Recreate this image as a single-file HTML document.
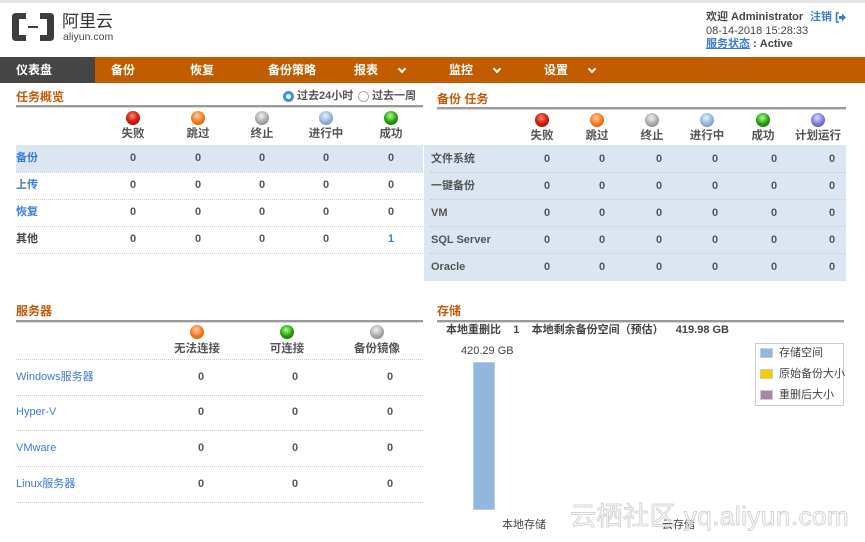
<!DOCTYPE html>
<html><head><meta charset="utf-8"><style>
*{margin:0;padding:0;box-sizing:border-box}
body{width:865px;height:542px;overflow:hidden;background:#fff;font-family:"Liberation Sans","Noto Sans CJK SC",sans-serif;font-size:11px;line-height:14px;color:#444;position:relative}
.a{position:absolute;white-space:nowrap}
.b{font-weight:bold}
.t{color:#c05a0a;font-weight:bold;font-size:12px}
.rule{position:absolute;height:3px;border-top:2px solid #9a9a9a;border-bottom:1px solid #d8d8d8}
.ball{position:absolute;width:14px;height:14px;border-radius:50%}
.red{background:radial-gradient(circle at 45% 35%,#ff8a70 0,#d42010 45%,#8a0a00 100%)}
.org{background:radial-gradient(circle at 45% 35%,#ffd0a0 0,#f47a24 50%,#c04a00 100%)}
.gry{background:radial-gradient(circle at 45% 35%,#f0f0f0 0,#a8a8a8 55%,#707070 100%)}
.blu{background:radial-gradient(circle at 45% 35%,#e6f0ff 0,#8eb0da 55%,#5a7eac 100%)}
.grn{background:radial-gradient(circle at 45% 35%,#b0ff90 0,#28a010 50%,#0a6000 100%)}
.pur{background:radial-gradient(circle at 45% 35%,#d8d8ff 0,#7a74d8 55%,#4a44a0 100%)}
.lbl{position:absolute;font-size:11.5px;font-weight:bold;color:#555;transform:translateX(-50%);white-space:nowrap}
.v{position:absolute;font-weight:bold;color:#555;transform:translateX(-50%)}
.lnk{color:#3a7bd5}
.sep{position:absolute;border-top:1px dotted #ccc}
.nav{position:absolute;top:57px;height:26px;color:#fff;font-weight:bold;font-size:12px;line-height:26px}
.chev{position:absolute;width:6px;height:6px;border-right:2px solid #fff;border-bottom:2px solid #fff;transform:rotate(45deg)}
</style></head><body>
<div class="a" style="left:0;top:0;width:865px;height:3px;background:#e6e6e6"></div>
<svg class="a" style="left:10px;top:11px" width="46" height="32" viewBox="0 0 46 32">
<path d="M16 2 H6 Q2 2 2 6 V26 Q2 30 6 30 H16 V24 H9 V8 H16Z" fill="#3d3d3d"/>
<path d="M30 2 H40 Q44 2 44 6 V26 Q44 30 40 30 H30 V24 H37 V8 H30Z" fill="#3d3d3d"/>
<rect x="18" y="15" width="10" height="2" fill="#3d3d3d"/>
</svg>
<div class="a" style="left:62px;top:12px;font-size:17px;line-height:20px;color:#333">阿里云</div>
<div class="a" style="left:63px;top:30px;font-size:10.5px;color:#444">aliyun.com</div>
<div class="a b" style="left:706px;top:10px;color:#444">欢迎 Administrator</div>
<div class="a b lnk" style="left:810px;top:10px">注销</div>
<svg class="a" style="left:835px;top:12px" width="12" height="11" viewBox="0 0 12 11"><path d="M4 1H1.5V10H4" stroke="#3a7bd5" stroke-width="1.6" fill="none"/><path d="M4 4H7V1.5L11 5.5L7 9.5V7H4Z" fill="#3a7bd5"/></svg>
<div class="a" style="left:706px;top:24px;color:#444">08-14-2018 15:28:33</div>
<div class="a b" style="left:706px;top:37px;color:#444"><span class="lnk" style="text-decoration:underline">服务状态</span> : Active</div>
<div class="a" style="left:0;top:57px;width:865px;height:26px;background:#c15d00"></div>
<div class="a" style="left:0;top:57px;width:95px;height:26px;background:#454545"></div>
<div class="nav" style="left:16px">仪表盘</div>
<div class="nav" style="left:111px">备份</div>
<div class="nav" style="left:190px">恢复</div>
<div class="nav" style="left:268px">备份策略</div>
<div class="nav" style="left:354px">报表</div><div class="chev" style="left:399px;top:66px"></div>
<div class="nav" style="left:449px">监控</div><div class="chev" style="left:494px;top:66px"></div>
<div class="nav" style="left:544px">设置</div><div class="chev" style="left:589px;top:66px"></div>

<div class="a t" style="left:16px;top:90px">任务概览</div>
<div class="a" style="left:283px;top:91px;width:11px;height:11px;border-radius:50%;background:#3a8ee6;border:3px solid #3a8ee6"><div style="width:5px;height:5px;background:#fff;border-radius:50%"></div></div>
<div class="a b" style="left:297px;top:89px;color:#555">过去24小时</div>
<div class="a" style="left:358px;top:91px;width:11px;height:11px;border-radius:50%;border:1px solid #aaa"></div>
<div class="a b" style="left:372px;top:89px;color:#555">过去一周</div>
<div class="rule" style="left:16px;top:105px;width:407px"></div>
<div class="ball red" style="left:126px;top:111px"></div><div class="lbl" style="left:133px;top:127px">失败</div>
<div class="ball org" style="left:191px;top:111px"></div><div class="lbl" style="left:198px;top:127px">跳过</div>
<div class="ball gry" style="left:255px;top:111px"></div><div class="lbl" style="left:262px;top:127px">终止</div>
<div class="ball blu" style="left:319px;top:111px"></div><div class="lbl" style="left:326px;top:127px">进行中</div>
<div class="ball grn" style="left:384px;top:111px"></div><div class="lbl" style="left:391px;top:127px">成功</div>
<div class="a" style="left:16px;top:145px;width:407px;height:27px;background:#dce6f2"></div>
<div class="sep" style="left:16px;top:172px;width:407px"></div>
<div class="sep" style="left:16px;top:199px;width:407px"></div>
<div class="sep" style="left:16px;top:226px;width:407px"></div>
<div class="sep" style="left:16px;top:253px;width:407px"></div>

<div class="a" style="left:424px;top:145px;width:422px;height:136px;background:#dce6f2"></div>
<div class="sep" style="left:430px;top:172px;width:416px"></div>
<div class="sep" style="left:430px;top:199px;width:416px"></div>
<div class="sep" style="left:430px;top:226px;width:416px"></div>
<div class="sep" style="left:430px;top:253px;width:416px"></div>

<div class="a b lnk" style="left:16px;top:151px">备份</div>
<div class="a b lnk" style="left:16px;top:178px">上传</div>
<div class="a b lnk" style="left:16px;top:205px">恢复</div>
<div class="a b" style="left:16px;top:232px;color:#444">其他</div>
<div id="L"></div>

<div class="a t" style="left:437px;top:92px">备份 任务</div>
<div class="rule" style="left:437px;top:107px;width:409px"></div>
<div class="ball red" style="left:535px;top:113px"></div><div class="lbl" style="left:542px;top:129px">失败</div>
<div class="ball org" style="left:590px;top:113px"></div><div class="lbl" style="left:597px;top:129px">跳过</div>
<div class="ball gry" style="left:645px;top:113px"></div><div class="lbl" style="left:652px;top:129px">终止</div>
<div class="ball blu" style="left:700px;top:113px"></div><div class="lbl" style="left:707px;top:129px">进行中</div>
<div class="ball grn" style="left:756px;top:113px"></div><div class="lbl" style="left:763px;top:129px">成功</div>
<div class="ball pur" style="left:811px;top:113px"></div><div class="lbl" style="left:818px;top:129px">计划运行</div>

<div class="a b" style="left:431px;top:152px;color:#555">文件系统</div>
<div class="a b" style="left:431px;top:179px;color:#555">一键备份</div>
<div class="a b" style="left:431px;top:206px;color:#555">VM</div>
<div class="a b" style="left:431px;top:233px;color:#555">SQL Server</div>
<div class="a b" style="left:431px;top:260px;color:#555">Oracle</div>
<div id="R"></div>
<script>
var xs=[547,602,659,715,774,832],ys=[152,179,206,233,260],h='';
ys.forEach(function(y){xs.forEach(function(x){h+='<div class="v" style="left:'+x+'px;top:'+y+'px">0</div>'})});
document.getElementById('R').outerHTML=h;
var lx=[133,198,262,326,391],ly=[151,178,205,232],g='';
ly.forEach(function(y,i){lx.forEach(function(x,j){var one=(i==3&&j==4);g+='<div class="v'+(one?' lnk':'')+'" style="left:'+x+'px;top:'+y+'px">'+(one?'1':'0')+'</div>'})});
document.getElementById('L').outerHTML=g;
</script>

<div class="a t" style="left:16px;top:304px">服务器</div>
<div class="rule" style="left:16px;top:320px;width:407px"></div>
<div class="ball org" style="left:190px;top:325px"></div><div class="lbl" style="left:197px;top:342px">无法连接</div>
<div class="ball grn" style="left:280px;top:325px"></div><div class="lbl" style="left:287px;top:342px">可连接</div>
<div class="ball gry" style="left:370px;top:325px"></div><div class="lbl" style="left:377px;top:342px">备份镜像</div>
<div class="sep" style="left:16px;top:359px;width:407px"></div>
<div class="sep" style="left:16px;top:395px;width:407px"></div>
<div class="sep" style="left:16px;top:430px;width:407px"></div>
<div class="sep" style="left:16px;top:466px;width:407px"></div>
<div class="sep" style="left:16px;top:502px;width:407px"></div>
<div class="a lnk" style="left:16px;top:370px">Windows服务器</div>
<div class="a lnk" style="left:16px;top:405px">Hyper-V</div>
<div class="a lnk" style="left:16px;top:441px">VMware</div>
<div class="a lnk" style="left:16px;top:477px">Linux服务器</div>
<div class="v" style="left:201px;top:370px">0</div><div class="v" style="left:295px;top:370px">0</div><div class="v" style="left:390px;top:370px">0</div>
<div class="v" style="left:201px;top:405px">0</div><div class="v" style="left:295px;top:405px">0</div><div class="v" style="left:390px;top:405px">0</div>
<div class="v" style="left:201px;top:441px">0</div><div class="v" style="left:295px;top:441px">0</div><div class="v" style="left:390px;top:441px">0</div>
<div class="v" style="left:201px;top:477px">0</div><div class="v" style="left:295px;top:477px">0</div><div class="v" style="left:390px;top:477px">0</div>

<div class="a t" style="left:437px;top:304px">存储</div>
<div class="rule" style="left:437px;top:320px;width:407px"></div>
<div class="a b" style="left:446px;top:323px;color:#444">本地重删比&nbsp;&nbsp;&nbsp;&nbsp;1&nbsp;&nbsp;&nbsp;&nbsp;本地剩余备份空间（预估）&nbsp;&nbsp;&nbsp;&nbsp;419.98 GB</div>
<div class="a" style="left:461px;top:344px;color:#444">420.29 GB</div>
<div class="a" style="left:473px;top:362px;width:22px;height:148px;background:#93b6dc;border:1px solid #b8cfe8"></div>
<div class="a" style="left:502px;top:518px;color:#444">本地存储</div>
<div class="a" style="left:662px;top:518px;color:#444">云存储</div>
<div class="a" style="left:755px;top:343px;width:89px;height:63px;border:1px solid #ccc;background:#fff"></div>
<div class="a" style="left:760px;top:348px;width:13px;height:10px;background:#93b6dc;border:1px solid #ccc"></div>
<div class="a" style="left:779px;top:346px">存储空间</div>
<div class="a" style="left:760px;top:369px;width:13px;height:10px;background:#f0cc00;border:1px solid #ccc"></div>
<div class="a" style="left:779px;top:367px">原始备份大小</div>
<div class="a" style="left:760px;top:390px;width:13px;height:10px;background:#a888a8;border:1px solid #ccc"></div>
<div class="a" style="left:779px;top:388px">重删后大小</div>
<div class="a" style="left:570px;top:501px;font-size:26px;line-height:30px;letter-spacing:0.5px;color:rgba(255,255,255,0.6);-webkit-text-stroke:1px #d4d4d4">云栖社区 yq.aliyun.com</div>
</body></html>
